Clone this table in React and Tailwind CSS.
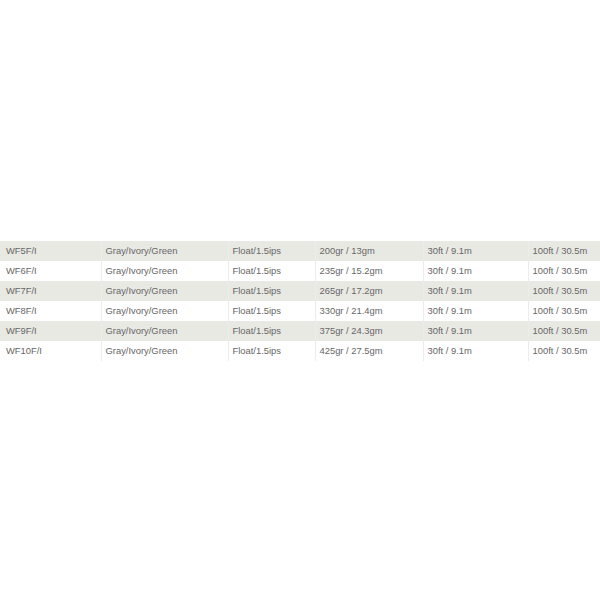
const rows = [
  ['WF5F/I', 'Gray/Ivory/Green', 'Float/1.5ips', '200gr / 13gm', '30ft / 9.1m', '100ft / 30.5m'],
  ['WF6F/I', 'Gray/Ivory/Green', 'Float/1.5ips', '235gr / 15.2gm', '30ft / 9.1m', '100ft / 30.5m'],
  ['WF7F/I', 'Gray/Ivory/Green', 'Float/1.5ips', '265gr / 17.2gm', '30ft / 9.1m', '100ft / 30.5m'],
  ['WF8F/I', 'Gray/Ivory/Green', 'Float/1.5ips', '330gr / 21.4gm', '30ft / 9.1m', '100ft / 30.5m'],
  ['WF9F/I', 'Gray/Ivory/Green', 'Float/1.5ips', '375gr / 24.3gm', '30ft / 9.1m', '100ft / 30.5m'],
  ['WF10F/I', 'Gray/Ivory/Green', 'Float/1.5ips', '425gr / 27.5gm', '30ft / 9.1m', '100ft / 30.5m'],
];

// column widths taken from the screenshot
const widths = ['w-[101px]', 'w-[127px]', 'w-[87px]', 'w-[108px]', 'w-[105px]', 'w-[72px]'];

export default function App() {
  return (
    <div className="w-[600px] h-[600px] bg-white pt-[241px] font-['Liberation_Sans',Arial,sans-serif]">
      <table className="w-[600px] table-fixed border-collapse text-[9.4px] text-[#666666]">
        <colgroup>
          {widths.map((w, i) => <col key={i} className={w} />)}
        </colgroup>
        <tbody>
          {rows.map((r, i) => (
            <tr key={i} className={i % 2 === 0 ? 'bg-[#e9e9e4]' : 'bg-white'}>
              {r.map((c, j) => (
                <td
                  key={j}
                  className={`h-5 p-0 whitespace-nowrap overflow-hidden ${j === 0 ? 'pl-[6px]' : 'pl-[4px] border-l border-[#ececec]'}`}
                >
                  {c}
                </td>
              ))}
            </tr>
          ))}
        </tbody>
      </table>
    </div>
  );
}
